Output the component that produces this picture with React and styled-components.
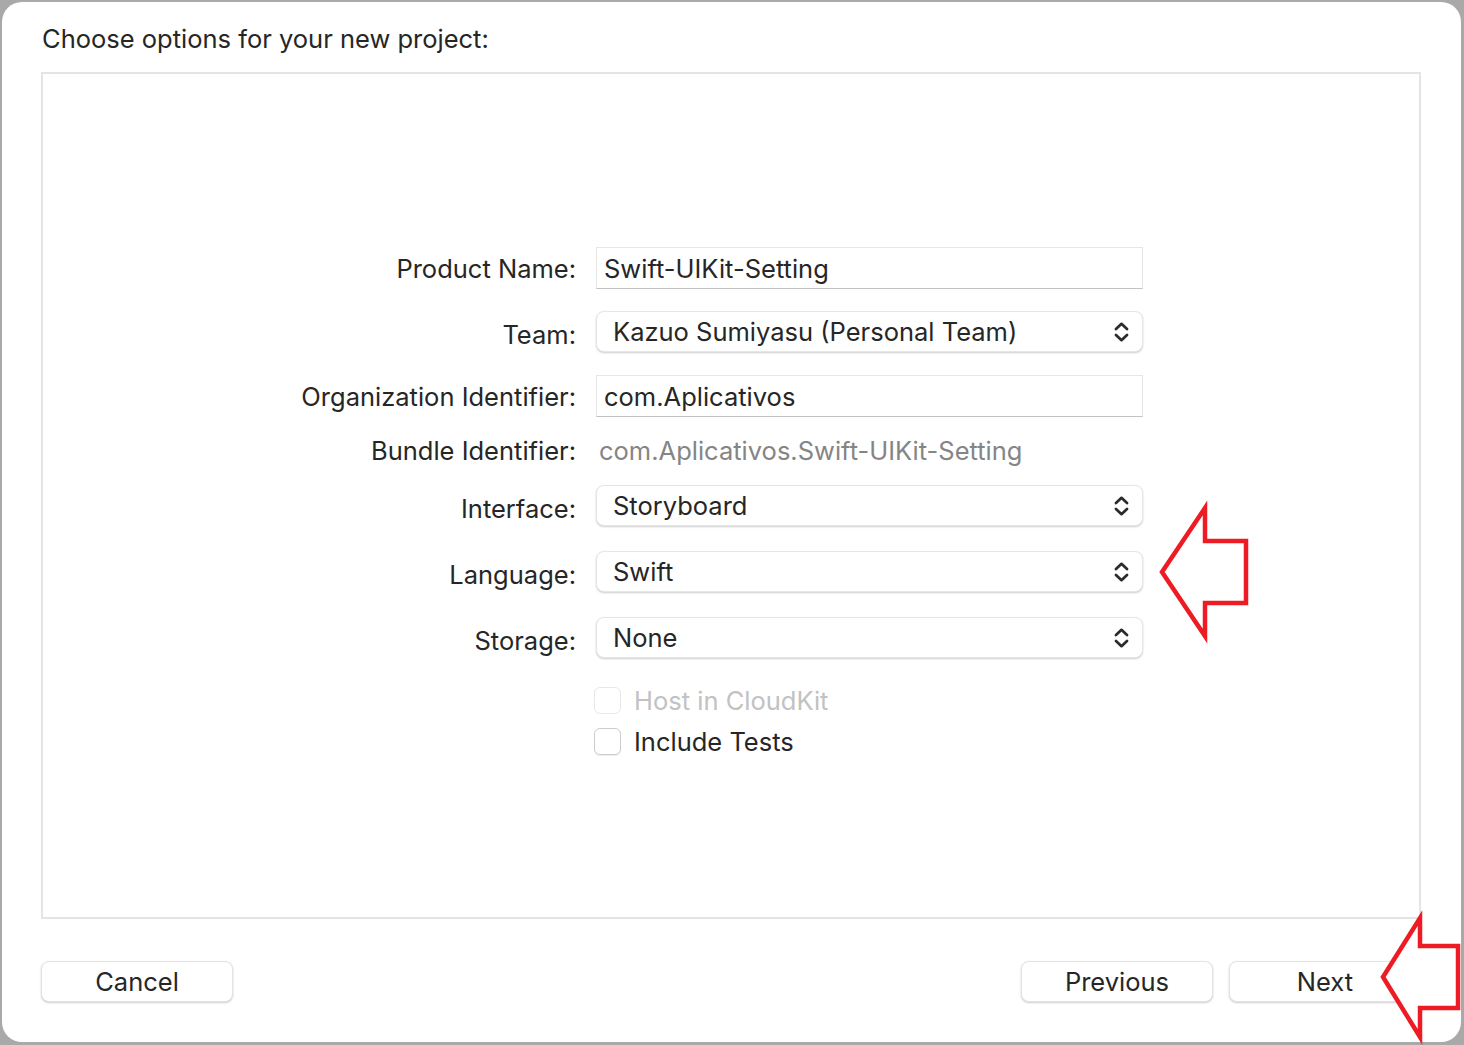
import styled, { createGlobalStyle } from 'styled-components'

const Global = createGlobalStyle`
	html, body {
		margin: 0;
		padding: 0;
		background: #a9a9a9;
	}
	* {
		box-sizing: border-box;
	}
`

const Screen = styled.div`
	position: relative;
	width: 1464px;
	height: 1045px;
	padding: 2px 3px 3px 2px;
	font-family: Inter, 'Noto Sans', sans-serif;
	font-size: 25.5px;
	color: #262626;
`

const Window = styled.div`
	height: 100%;
	display: flex;
	flex-direction: column;
	background: #fff;
	border-radius: 20px;
	padding: 0 40px 40px 39px;
`

const Title = styled.h1`
	margin: 0;
	height: 70px;
	display: flex;
	align-items: center;
	padding: 3px 0 0 1px;
	font-size: inherit;
	font-weight: 400;
`

const Panel = styled.div`
	flex: 1;
	border: 2px solid #e4e4e4;
	padding: 173px 0 0 0;
`

const Form = styled.div`
	display: flex;
	flex-direction: column;
`

const Row = styled.div`
	display: grid;
	grid-template-columns: 533px 547px;
	column-gap: 20px;
	align-items: center;
	height: ${(p) => p.$h}px;
	margin-top: ${(p) => p.$mt || 0}px;
`

const Label = styled.div`
	text-align: right;
	padding-top: ${(p) => (p.$nudge ? 5 : 0)}px;
`

const TextField = styled.div`
	height: 42px;
	display: flex;
	align-items: center;
	padding-left: 7px;
	border: 1px solid #e6e6e6;
	border-bottom-color: #c2c2c2;
	background: #fff;
`

const Plain = styled.div`
	color: #858585;
	padding-left: 3px;
`

const Popup = styled.div`
	height: 41px;
	display: flex;
	align-items: center;
	justify-content: space-between;
	padding: 0 13px 0 16px;
	background: #fff;
	border: 1px solid #e6e6e6;
	border-radius: 8px;
	box-shadow: 0 1px 2px rgba(0, 0, 0, 0.2);
`

const CheckLine = styled.label`
	grid-column: 2;
	display: flex;
	align-items: center;
	gap: 13px;
	margin-left: -2px;
	color: ${(p) => (p.$disabled ? '#c2c2c2' : '#262626')};
`

const Box = styled.span`
	width: 27px;
	height: 27px;
	border-radius: 6px;
	background: #fff;
	border: 1px solid ${(p) => (p.$disabled ? '#e8e8e8' : '#cdcdcd')};
	box-shadow: ${(p) => (p.$disabled ? 'none' : '0 1px 1px rgba(0,0,0,0.08)')};
`

const Footer = styled.div`
	display: flex;
	align-items: center;
	justify-content: space-between;
	padding-top: 42px;
`

const Buttons = styled.div`
	display: flex;
	gap: 16px;
`

const Button = styled.button`
	width: 192px;
	height: 41px;
	font-family: inherit;
	font-size: inherit;
	color: #262626;
	background: #fff;
	border: 1px solid #e3e3e3;
	border-radius: 8px;
	box-shadow: 0 1px 2px rgba(0, 0, 0, 0.2);
	padding: 0;
`

const Arrow = styled.svg`
	position: absolute;
	left: ${(p) => p.$x}px;
	top: ${(p) => p.$y}px;
	overflow: visible;
`

const Chevrons = () => (
	<svg width="15" height="20" viewBox="0 0 15 20" fill="none" stroke="#2b2b2b" strokeWidth="2.7" strokeLinecap="round" strokeLinejoin="round">
		<path d="M2 7 L7.5 1.8 L13 7" />
		<path d="M2 13 L7.5 18.2 L13 13" />
	</svg>
)

const Select = ({ value }) => (
	<Popup>
		<span>{value}</span>
		<Chevrons />
	</Popup>
)

const BigArrow = ({ x, y, tip, top, neck, tail, bottom, mid }) => (
	<Arrow $x={x} $y={y} width={tail + 6} height={bottom + 6}>
		<polygon
			points={`${tip},${mid} ${neck},${top} ${neck},${mid - 31} ${tail},${mid - 31} ${tail},${mid + 31} ${neck},${mid + 31} ${neck},${bottom}`}
			fill="#fff"
			stroke="#ed1c24"
			strokeWidth="4.5"
			strokeLinejoin="miter"
		/>
	</Arrow>
)

export default function App() {
	return (
		<>
			<Global />
			<Screen>
				<Window>
					<Title>Choose options for your new project:</Title>
					<Panel>
						<Form>
							<Row $h={42}>
								<Label>Product Name:</Label>
								<TextField>Swift-UIKit-Setting</TextField>
							</Row>
							<Row $h={41} $mt={22}>
								<Label $nudge>Team:</Label>
								<Select value="Kazuo Sumiyasu (Personal Team)" />
							</Row>
							<Row $h={42} $mt={23}>
								<Label>Organization Identifier:</Label>
								<TextField>com.Aplicativos</TextField>
							</Row>
							<Row $h={28} $mt={18}>
								<Label>Bundle Identifier:</Label>
								<Plain>com.Aplicativos.Swift-UIKit-Setting</Plain>
							</Row>
							<Row $h={41} $mt={22}>
								<Label $nudge>Interface:</Label>
								<Select value="Storyboard" />
							</Row>
							<Row $h={41} $mt={25}>
								<Label $nudge>Language:</Label>
								<Select value="Swift" />
							</Row>
							<Row $h={41} $mt={25}>
								<Label $nudge>Storage:</Label>
								<Select value="None" />
							</Row>
							<Row $h={28} $mt={27}>
								<CheckLine $disabled>
									<Box $disabled />
									Host in CloudKit
								</CheckLine>
							</Row>
							<Row $h={28} $mt={13}>
								<CheckLine>
									<Box />
									Include Tests
								</CheckLine>
							</Row>
						</Form>
					</Panel>
					<Footer>
						<Button>Cancel</Button>
						<Buttons>
							<Button>Previous</Button>
							<Button>Next</Button>
						</Buttons>
					</Footer>
				</Window>
				<BigArrow x={1158} y={504} tip={4} mid={68} neck={47} top={4} tail={88} bottom={132} />
				<BigArrow x={1378} y={914} tip={5} mid={63} neck={42} top={4} tail={80} bottom={123} />
			</Screen>
		</>
	)
}
